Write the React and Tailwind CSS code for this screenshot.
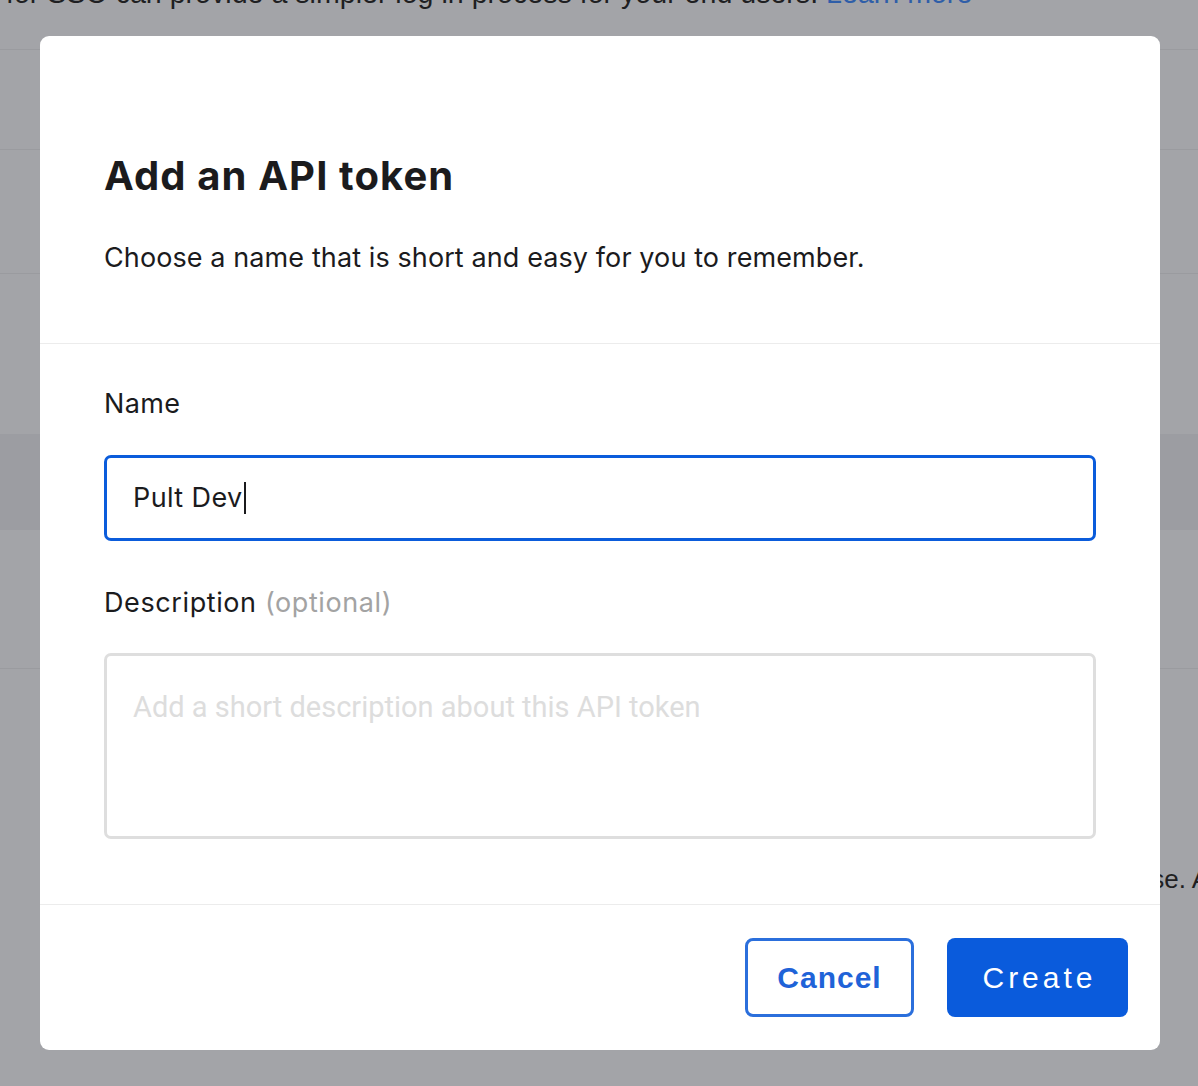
import React from 'react'

// background page, dimmed by the modal overlay
function PageBehind() {
  return (
    <div className="min-h-[1086px] bg-[#a3a4a8] text-[#1f1f22]">
      <div className="h-[50px] border-b border-[#9a9b9f] overflow-hidden">
        <p className="-mt-[24px] whitespace-nowrap text-[28.6px] leading-[34px] font-['Liberation_Sans',sans-serif] ml-[6px]">
          for SSO can provide a simpler log in process for your end users. <span className="text-[#2f5ea8]">Learn more</span>
        </p>
      </div>
      <div className="h-[100px] border-b border-[#9a9b9f]" />
      <div className="h-[124px] border-b border-[#9a9b9f]" />
      <div className="h-[160px]" />
      <div className="h-[96px] bg-[#9c9da2]" />
      <div className="h-[139px] border-b border-[#9a9b9f]" />
      <div className="h-[416px] pt-[194px] flex justify-end overflow-hidden">
        <p className="whitespace-nowrap text-[26px] leading-[32px] font-['Liberation_Sans',sans-serif] -mr-[11px]">
          of the license. A
        </p>
      </div>
    </div>
  )
}

function TokenModal() {
  return (
    <div className="fixed left-[40px] top-[36px] w-[1120px] h-[1014px] bg-white rounded-[9px] flex flex-col font-['Inter',sans-serif] text-[#1b1b1d]">
      <div className="px-[64px] pt-[118px] pb-[67px] border-b border-[#ececec]">
        <h2 className="text-[40px] leading-[44px] font-bold tracking-[1.1px]">Add an API token</h2>
        <p className="mt-[42px] text-[27px] leading-[36px] tracking-[0.1px]">Choose a name that is short and easy for you to remember.</p>
      </div>
      <div className="flex-1 px-[64px] pt-[42px] border-b border-[#ececec] text-[27px] leading-[36px] tracking-[0.4px]">
        <label className="block">Name</label>
        <div className="mt-[33px] h-[86px] border-[3px] border-[#0b5cdb] rounded-[7px] flex items-center pl-[26px]">
          <span>Pult Dev</span>
          <span className="w-[2px] h-[32px] bg-[#1b1b1d] ml-[1px]" />
        </div>
        <label className="block mt-[44px] tracking-[0.6px]">
          Description <span className="text-[#a3a3a3]">(optional)</span>
        </label>
        <div className="mt-[32px] h-[186px] border-[3px] border-[#dedede] rounded-[7px] pl-[26px] pt-[33px]">
          <span className="text-[29px] leading-[36px] tracking-normal text-[#dddddd] font-['Roboto',sans-serif]">Add a short description about this API token</span>
        </div>
      </div>
      <div className="h-[145px] flex items-center justify-end gap-[33px] pr-[32px] font-['Liberation_Sans',sans-serif]">
        <button className="w-[169px] h-[79px] border-[3px] border-[#2b6fdc] rounded-[8px] text-[30px] font-bold text-[#1f63d8] tracking-[1px]">
          Cancel
        </button>
        <button className="w-[181px] h-[79px] bg-[#0a5bdc] rounded-[8px] text-[30px] text-white tracking-[4px] pl-[4px]">
          Create
        </button>
      </div>
    </div>
  )
}

export default function App() {
  return (
    <div className="relative w-[1198px] h-[1086px] overflow-hidden">
      <PageBehind />
      <TokenModal />
    </div>
  )
}
